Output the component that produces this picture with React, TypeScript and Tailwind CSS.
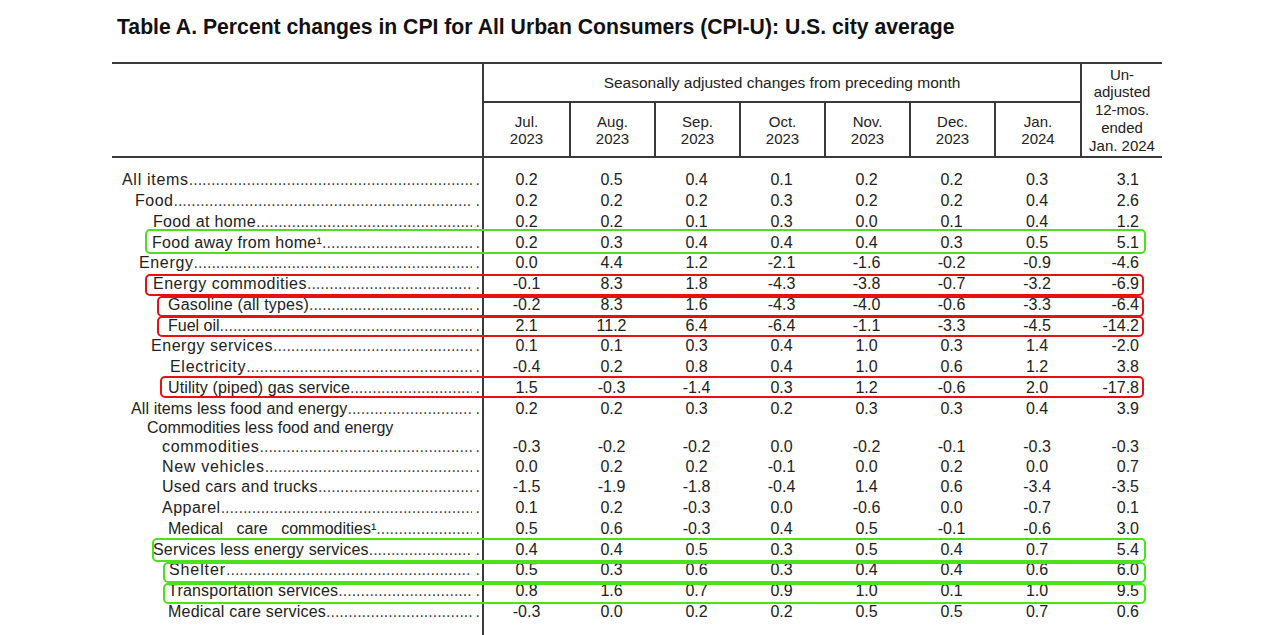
import React from "react";

type Row = {
  label: string;
  pad: string;
  track?: string;
  first?: string;
  v: string[];
};

const months = [
  ["Jul.", "2023"],
  ["Aug.", "2023"],
  ["Sep.", "2023"],
  ["Oct.", "2023"],
  ["Nov.", "2023"],
  ["Dec.", "2023"],
  ["Jan.", "2024"],
];

const colW = ["w-[85px]", "w-[85px]", "w-[85px]", "w-[85px]", "w-[85px]", "w-[85px]", "w-[86px]"];

const rows: Row[] = [
  { label: "All items", pad: "pl-[10px]", track: "tracking-[0.7px]", v: ["0.2", "0.5", "0.4", "0.1", "0.2", "0.2", "0.3", "3.1"] },
  { label: "Food", pad: "pl-[23px]", track: "tracking-[0.5px]", v: ["0.2", "0.2", "0.2", "0.3", "0.2", "0.2", "0.4", "2.6"] },
  { label: "Food at home", pad: "pl-[41px]", track: "tracking-[0.35px]", v: ["0.2", "0.2", "0.1", "0.3", "0.0", "0.1", "0.4", "1.2"] },
  { label: "Food away from home¹", pad: "pl-[40px]", track: "tracking-[0.28px]", v: ["0.2", "0.3", "0.4", "0.4", "0.4", "0.3", "0.5", "5.1"] },
  { label: "Energy", pad: "pl-[27px]", track: "tracking-[0.65px]", v: ["0.0", "4.4", "1.2", "-2.1", "-1.6", "-0.2", "-0.9", "-4.6"] },
  { label: "Energy commodities", pad: "pl-[41px]", track: "tracking-[0.5px]", v: ["-0.1", "8.3", "1.8", "-4.3", "-3.8", "-0.7", "-3.2", "-6.9"] },
  { label: "Gasoline (all types)", pad: "pl-[56px]", track: "tracking-[0.2px]", v: ["-0.2", "8.3", "1.6", "-4.3", "-4.0", "-0.6", "-3.3", "-6.4"] },
  { label: "Fuel oil", pad: "pl-[56px]", v: ["2.1", "11.2", "6.4", "-6.4", "-1.1", "-3.3", "-4.5", "-14.2"] },
  { label: "Energy services", pad: "pl-[39px]", track: "tracking-[0.55px]", v: ["0.1", "0.1", "0.3", "0.4", "1.0", "0.3", "1.4", "-2.0"] },
  { label: "Electricity", pad: "pl-[58px]", track: "tracking-[0.7px]", v: ["-0.4", "0.2", "0.8", "0.4", "1.0", "0.6", "1.2", "3.8"] },
  { label: "Utility (piped) gas service", pad: "pl-[56px]", track: "tracking-[0.12px]", v: ["1.5", "-0.3", "-1.4", "0.3", "1.2", "-0.6", "2.0", "-17.8"] },
  { label: "All items less food and energy", pad: "pl-[19px]", track: "tracking-[0.1px]", v: ["0.2", "0.2", "0.3", "0.2", "0.3", "0.3", "0.4", "3.9"] },
  { label: "commodities", first: "Commodities less food and energy", pad: "pl-[50px]", track: "tracking-[0.7px]", v: ["-0.3", "-0.2", "-0.2", "0.0", "-0.2", "-0.1", "-0.3", "-0.3"] },
  { label: "New vehicles", pad: "pl-[50px]", track: "tracking-[0.7px]", v: ["0.0", "0.2", "0.2", "-0.1", "0.0", "0.2", "0.0", "0.7"] },
  { label: "Used cars and trucks", pad: "pl-[50px]", track: "tracking-[0.28px]", v: ["-1.5", "-1.9", "-1.8", "-0.4", "1.4", "0.6", "-3.4", "-3.5"] },
  { label: "Apparel", pad: "pl-[50px]", track: "tracking-[0.5px]", v: ["0.1", "0.2", "-0.3", "0.0", "-0.6", "0.0", "-0.7", "0.1"] },
  { label: "Medical care commodities¹", pad: "pl-[56px]", track: "[word-spacing:9px]", v: ["0.5", "0.6", "-0.3", "0.4", "0.5", "-0.1", "-0.6", "3.0"] },
  { label: "Services less energy services", pad: "pl-[41px]", track: "tracking-[0.17px]", v: ["0.4", "0.4", "0.5", "0.3", "0.5", "0.4", "0.7", "5.4"] },
  { label: "Shelter", pad: "pl-[57px]", track: "tracking-[0.9px]", v: ["0.5", "0.3", "0.6", "0.3", "0.4", "0.4", "0.6", "6.0"] },
  { label: "Transportation services", pad: "pl-[56px]", track: "tracking-[0.2px]", v: ["0.8", "1.6", "0.7", "0.9", "1.0", "0.1", "1.0", "9.5"] },
  { label: "Medical care services", pad: "pl-[56px]", track: "tracking-[0.2px]", v: ["-0.3", "0.0", "0.2", "0.2", "0.5", "0.5", "0.7", "0.6"] },
];

// hand-drawn highlight boxes laid over the table
const boxes = [
  "left-[33px] right-[16px] top-[165px] h-[25px] border-[#4ce01e]",
  "left-[33px] right-[18px] top-[210px] h-[22px] border-[#e81010]",
  "left-[45px] right-[18px] top-[232px] h-[21px] border-[#e81010]",
  "left-[45px] right-[18px] top-[252px] h-[21px] border-[#e81010]",
  "left-[48px] right-[18px] top-[312px] h-[22px] border-[#e81010]",
  "left-[40px] right-[16px] top-[474px] h-[24px] border-[#4ce01e]",
  "left-[51px] right-[16px] top-[498px] h-[21px] border-[#4ce01e]",
  "left-[51px] right-[16px] top-[519px] h-[21px] border-[#4ce01e]",
];

const DOTS = ".".repeat(120);

function Leader({ label, track }: { label: string; track?: string }) {
  return (
    <div className="flex min-w-0 flex-1 whitespace-nowrap">
      <span className={`shrink-0 ${track ?? ""}`}>{label}</span>
      <span className="min-w-0 flex-1 overflow-hidden text-[#444]">{DOTS}</span>
      <span className="shrink-0 pl-[4px] text-[#444]">.</span>
    </div>
  );
}

function Values({ v }: { v: string[] }) {
  return (
    <>
      {v.slice(0, 7).map((x, i) => (
        <div key={i} className={`${colW[i]} text-center`}>
          {x}
        </div>
      ))}
      <div className="w-[82px] pr-[23px] text-right">{v[7]}</div>
    </>
  );
}

export default function App() {
  return (
    <div className="h-[635px] w-[1262px] overflow-hidden bg-white font-['Liberation_Sans',Arial,sans-serif] text-[#222]">
      <h1 className="pl-[117px] pt-[13px] text-[21.2px] leading-[28px] font-bold text-[#111]">
        Table A. Percent changes in CPI for All Urban Consumers (CPI-U): U.S. city average
      </h1>

      <div className="relative ml-[112px] mt-[21px] w-[1050px] border-t-2 border-[#3a3a3a]">
        {/* Header */}
        <div className="flex border-b-2 border-[#3a3a3a]">
          <div className="w-[372px] border-r-2 border-[#3a3a3a]" />
          <div className="flex w-[596px] flex-col">
            <div className="flex h-[39px] items-center justify-center border-b-2 border-[#3a3a3a] text-[15.5px]">
              Seasonally adjusted changes from preceding month
            </div>
            <div className="flex h-[53px]">
              {months.map((m, i) => (
                <div
                  key={i}
                  className={`${colW[i]} flex flex-col items-center justify-center text-[15px] leading-[17px] ${i > 0 ? "border-l-2 border-[#3a3a3a]" : ""}`}
                >
                  <span>{m[0]}</span>
                  <span>{m[1]}</span>
                </div>
              ))}
            </div>
          </div>
          <div className="flex w-[82px] flex-col items-center justify-center border-l-2 border-[#3a3a3a] text-[15px] leading-[17.75px]">
            <span>Un-</span>
            <span>adjusted</span>
            <span>12-mos.</span>
            <span>ended</span>
            <span>Jan. 2024</span>
          </div>
        </div>

        {/* Body */}
        <div className="text-[16px]">
          <div className="h-[12.4px] w-[372px] border-r-2 border-[#3a3a3a]" />
          {rows.map((r, i) =>
            r.first ? (
              <div key={i} className="flex h-[37.2px] leading-[18.6px]">
                <div className="flex w-[372px] flex-col border-r-2 border-[#3a3a3a] pr-[2px]">
                  <div className="pl-[35px] whitespace-nowrap">{r.first}</div>
                  <div className={`flex ${r.pad}`}>
                    <Leader label={r.label} track={r.track} />
                  </div>
                </div>
                <div className="flex items-end">
                  <Values v={r.v} />
                </div>
              </div>
            ) : (
              <div key={i} className="flex h-[20.75px] leading-[20.75px]">
                <div className={`flex w-[372px] border-r-2 border-[#3a3a3a] pr-[2px] ${r.pad}`}>
                  <Leader label={r.label} track={r.track} />
                </div>
                <Values v={r.v} />
              </div>
            )
          )}
          <div className="h-[40px] w-[372px] border-r-2 border-[#3a3a3a]" />
        </div>

        {boxes.map((b, i) => (
          <div key={i} className={`pointer-events-none absolute rounded-[5px] border-2 ${b}`} />
        ))}
      </div>
    </div>
  );
}
